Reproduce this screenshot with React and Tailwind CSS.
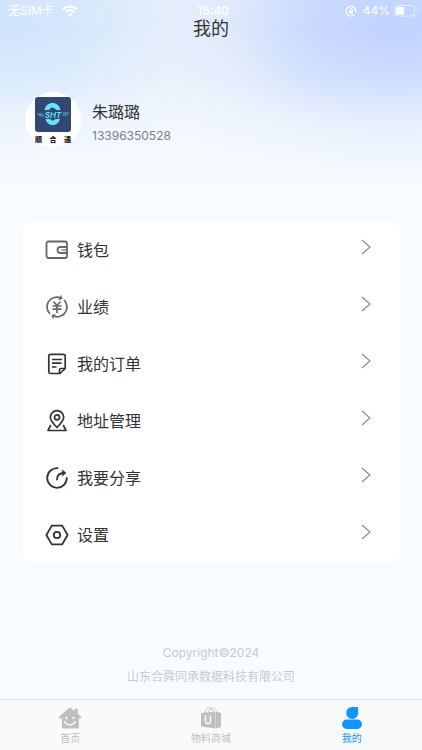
import clsx from "clsx"

const WalletIcon = () => (
  <svg viewBox="0 0 24 24" className="size-6 text-[#666]" fill="none" stroke="currentColor" strokeWidth="1.8">
    <rect x="1.500" y="3.500" width="20.500" height="16.500" rx="2" />
    <path d="M22 9h-6.500a3 3 0 0 0 0 6H22" />
    <path d="M22 12h-5.500" strokeWidth="1.200" />
  </svg>
)

const SalesIcon = () => (
  <svg viewBox="0 0 24 24" className="size-6 text-[#666]" fill="none" stroke="currentColor" strokeWidth="1.7">
    <path d="M5 19A9.800 9.800 0 0 1 9.500 2.500c2-.5 4.500-.3 7 .7" />
    <path d="M19 5A9.800 9.800 0 0 1 14.500 21.500c-2 .5-4.500.3-7-.7" />
    <path d="M15.800.5l.9 3-3.200.8M8.200 23.500l-.9-3 3.200-.8" strokeWidth="1.300" />
    <path d="M8.500 6.500L12 10.500l3.500-4M7.500 11h9M7.500 14.200h9M12 11v7" />
  </svg>
)

const OrderIcon = () => (
  <svg viewBox="0 0 24 24" className="size-6 text-[#333]" fill="none" stroke="currentColor" strokeWidth="1.7" strokeLinejoin="round">
    <path d="M15 21.500H5.500A1.700 1.700 0 0 1 3.800 20V4a1.700 1.700 0 0 1 1.700-1.700h13A1.700 1.700 0 0 1 20.200 4v12.500z" />
    <path d="M14.500 21.500V18a1.500 1.500 0 0 1 1.500-1.500h4.200" />
    <path d="M7 7.500h10M7 11.200h9.500M7 15h4.500" />
  </svg>
)

const AddressIcon = () => (
  <svg viewBox="0 0 24 24" className="size-6 text-[#333]" fill="none" stroke="currentColor" strokeWidth="1.700" strokeLinejoin="round">
    <path d="M12 18.500C7.500 14 5.300 11.500 5.300 8.300a6.700 6.700 0 0 1 13.400 0c0 3.200-2.200 5.700-6.700 10.200z" />
    <circle cx="12" cy="8.300" r="2.500" />
    <path d="M5.800 16L3 21.500h18L18.200 16" />
  </svg>
)

const ShareIcon = () => (
  <svg viewBox="0 0 24 24" className="size-6 text-[#333]" fill="none" stroke="currentColor" strokeWidth="1.800" strokeLinecap="round">
    <path d="M12.500 2.200A9.800 9.800 0 1 0 21.800 12" />
    <path d="M12 13.500c0-4 2-6.300 7-6.500" />
    <path d="M17.500 4l3.500 3-3.500 3z" fill="currentColor" strokeWidth="0.500" />
  </svg>
)

const SettingsIcon = () => (
  <svg viewBox="0 0 24 24" className="size-6 text-[#333]" fill="none" stroke="currentColor" strokeWidth="1.800" strokeLinejoin="round">
    <path d="M6.800 2.600h10.400L22.600 12l-5.400 9.400H6.800L1.400 12z" />
    <circle cx="12" cy="12" r="3.200" />
  </svg>
)

const HomeIcon = () => (
  <svg viewBox="0 0 24 24" className="size-6" fill="currentColor">
    <path d="M12 1.500L16.500 5V3.500a.8.8 0 0 1 .8-.8h1.700a.8.8 0 0 1 .8.800V8l3 2.500c.8.800.3 2-.7 2h-1.300V21a1.500 1.500 0 0 1-1.500 1.500H5.500A1.500 1.500 0 0 1 4 21v-8.500H2c-1 0-1.500-1.200-.7-2L11 2a1.500 1.500 0 0 1 1-.5z" />
    <circle cx="8.500" cy="12" r="1.200" fill="#fafafa" />
    <circle cx="15.500" cy="12" r="1.200" fill="#fafafa" />
    <path d="M6.500 15.500c2.500 4.500 8.500 4.500 11 0" fill="none" stroke="#fafafa" strokeWidth="1.500" strokeLinecap="round" />
  </svg>
)

const ShopIcon = () => (
  <svg viewBox="0 0 24 24" className="size-6" fill="currentColor">
    <path d="M2 7L16 5.500v17L3.500 20.800A1.500 1.500 0 0 1 2 19.300z" />
    <path d="M16.400 5.500L22 7v13.200a1.500 1.500 0 0 1-1 1.300l-4.600 1z" />
    <path d="M6 7c.5-7 7-7 8-1M9.500 6c1.500-5.500 7-4.500 8 0" fill="none" stroke="currentColor" strokeWidth="0.900" />
    <path d="M6.500 9.500v5.500c0 3.500 5 3.500 5 0V9.500" fill="none" stroke="#fafafa" strokeWidth="1.500" />
  </svg>
)

const MineIcon = () => (
  <svg viewBox="0 0 24 24" className="size-6" fill="currentColor">
    <path d="M12 1h5.500a.7.700 0 0 1 .7.700V7A6 6 0 1 1 12 1z" />
    <rect x="2" y="13.500" width="20" height="9.500" rx="4.700" />
  </svg>
)

const Logo = () => (
  <svg viewBox="0 0 36 35" className="w-9">
    <rect width="36" height="35" rx="3" fill="#344674" />
    <path d="M9.500 13c1.500-9.500 14.500-9.500 16 0h-4.500c-1.500-3.500-5.500-3.500-7 0z" fill="#5fe8fa" />
    <path d="M10.500 22H15c2 2 3.500 2 5.500 0H25c-2 8-12.500 8-14.500 0z" fill="#5fe8fa" />
    <path d="M2 17h6M4 18.800h5M28 16h6M27.500 18h5" stroke="#5fe8fa" strokeWidth="0.700" />
    <text x="18" y="20.500" textAnchor="middle" fontSize="8" fontWeight="600" fontStyle="italic" fontFamily="Inter, sans-serif" fill="#5fe8fa">
      SHT
    </text>
  </svg>
)

const menuItems = [
  { label: "钱包", icon: WalletIcon },
  { label: "业绩", icon: SalesIcon },
  { label: "我的订单", icon: OrderIcon },
  { label: "地址管理", icon: AddressIcon },
  { label: "我要分享", icon: ShareIcon },
  { label: "设置", icon: SettingsIcon },
]

const tabs = [
  { label: "首页", icon: HomeIcon },
  { label: "物料商城", icon: ShopIcon },
  { label: "我的", icon: MineIcon, active: true },
]

const StatusBar = () => (
  <div className="grid h-5 grid-cols-3 items-center pt-0.5 pr-1 pl-2 text-xs text-white">
    <div className="flex items-center gap-2">
      <span>无SIM卡</span>
      <svg viewBox="0 0 16 12" className="w-4" fill="none" stroke="currentColor" strokeWidth="2.200">
        <path d="M1 4.500c4-4 10-4 14 0M3.500 7.300c2.700-2.600 6.300-2.600 9 0" />
        <path d="M5.500 9.300c1.500-1.400 3.500-1.400 5 0L8 12z" fill="currentColor" stroke="none" />
      </svg>
    </div>
    <span className="text-center font-medium">15:40</span>
    <div className="flex items-center justify-end gap-1">
      <svg viewBox="0 0 12 12" className="mr-0.5 w-3" fill="none" stroke="currentColor" strokeWidth="1.100">
        <path d="M9.500 9.500A4.800 4.800 0 1 1 10.800 6" />
        <path d="M9 5.500h3L10.700 7.700z" fill="currentColor" stroke="none" />
        <rect x="4" y="5.500" width="4" height="3" fill="currentColor" stroke="none" />
        <path d="M4.800 5.500V4.500a1.200 1.200 0 0 1 2.400 0v1" strokeWidth="0.800" />
      </svg>
      <span>44%</span>
      <svg viewBox="0 0 25 12" className="w-6" fill="none">
        <rect x="0.500" y="0.500" width="21" height="11" rx="3" stroke="currentColor" strokeOpacity="0.600" />
        <rect x="2" y="2" width="8.500" height="8" rx="1.500" fill="currentColor" />
        <path d="M23 4v4c1.500-.5 1.500-3.500 0-4z" fill="currentColor" fillOpacity="0.600" />
      </svg>
    </div>
  </div>
)

const App = () => {
  return (
    <div className="flex min-h-screen flex-col bg-[#f8fcff] bg-[linear-gradient(to_bottom,#f8fcff00_30px,#f8fcff30_75px,#f8fcffa0_125px,#f8fcff_195px),radial-gradient(ellipse_210px_220px_at_0%_35px,#cfe4fc,#cfe4fcc0_35%,#cfe4fc40_70%,#cfe4fc00),radial-gradient(ellipse_230px_220px_at_94%_40px,#c0d2ff,#c0d2ffc8_35%,#c0d2ff40_70%,#c0d2ff00),linear-gradient(#e8f0fb,#e8f0fb)] bg-[length:100%_195px] bg-no-repeat font-['Inter','Noto_Sans_CJK_SC',sans-serif] text-[#333]">
      <header>
        <StatusBar />
        <h1 className="text-center text-lg leading-[18px]">我的</h1>
      </header>

      <main className="flex-1 px-[22px]">
        <section className="mt-[54px] ml-[3px] flex items-center gap-[11px]">
          <div className="flex size-14 flex-col items-center justify-center rounded-full bg-white">
            <Logo />
            <div className="mt-1 flex w-9 justify-between text-[7px] leading-[8px] font-black text-[#222]">
              <span>順</span>
              <span>合</span>
              <span>通</span>
            </div>
          </div>
          <div className="pt-2">
            <p className="text-base leading-6">朱璐璐</p>
            <p className="text-xs leading-6 text-[#7b7f8c]">13396350528</p>
          </div>
        </section>

        <nav className="mt-[73px] rounded-xl bg-white">
          {menuItems.map(({ label, icon: Icon }) => (
            <button key={label} type="button" className="flex h-[57px] w-full items-center gap-2 pr-[29px] pl-[23px] text-left text-base">
              <Icon />
              <span className="flex-1">{label}</span>
              <svg viewBox="0 0 10 16" className="mb-1.5 h-4 w-2.5 text-[#888]" fill="none" stroke="currentColor" strokeWidth="1.100">
                <path d="M1 1l8 7-8 7" />
              </svg>
            </button>
          ))}
        </nav>

        <footer className="mt-[78px] text-center text-xs leading-6 text-[#c8cacd]">
          <p>Copyright©2024</p>
          <p>山东合舜同承数据科技有限公司</p>
        </footer>
      </main>

      <nav className="grid grid-cols-3 border-t border-[#dcdcdc] bg-[#fafafa] pt-1.5 pb-1">
        {tabs.map(({ label, icon: Icon, active }) => (
          <button
            key={label}
            type="button"
            className={clsx("flex flex-col items-center text-[10px] leading-4", active ? "text-[#1296fa]" : "text-[#bfbfbf]")}
          >
            <Icon />
            {label}
          </button>
        ))}
      </nav>
    </div>
  )
}

export default App
